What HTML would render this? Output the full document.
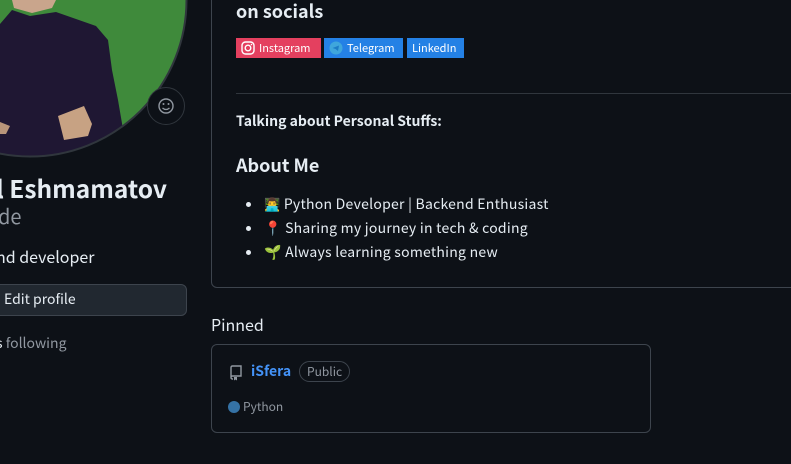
<!DOCTYPE html>
<html><head><meta charset="utf-8"><style>
*{margin:0;padding:0;box-sizing:border-box}
body{width:791px;height:464px;overflow:hidden;background:#0d1117;color:#e6edf3;font-family:"Noto Sans CJK SC","Liberation Sans",sans-serif;position:relative}
.a{position:absolute;white-space:nowrap}
.li{position:relative;padding-left:18px}
.li:before{content:"";position:absolute;left:0;top:10px;width:5px;height:5px;border-radius:50%;background:#e6edf3}
</style></head><body>
<svg class="a" style="left:0;top:0" width="200" height="170">
<defs><clipPath id="c"><circle cx="30" cy="0" r="156"/></clipPath></defs>
<g clip-path="url(#c)">
<rect x="-130" y="-160" width="320" height="320" fill="#3f8a3b"/>
<path d="M0 24 L12 10 L30 16 L56 12 L96 26 L108 40 L112 70 L118 100 L124 135 L118 160 L0 160Z" fill="#1f1733"/>
<path d="M12 0 L56 0 L52 8 L32 13 L14 8Z" fill="#c9a58c"/>
<path d="M58 116 L84 106 L92 124 L88 136 L64 140Z" fill="#c7a283"/>
<path d="M0 122 L10 126 L6 134 L0 134Z" fill="#b8957a"/>
</g>
<circle cx="30" cy="0" r="156.5" fill="none" stroke="#30363d" stroke-width="2"/>
<circle cx="166" cy="106" r="18.5" fill="#0d1117" stroke="#30363d"/>
<circle cx="166" cy="106" r="7" fill="none" stroke="#9198a1" stroke-width="1.4"/>
<circle cx="163.5" cy="104" r="1" fill="#9198a1"/><circle cx="168.5" cy="104" r="1" fill="#9198a1"/>
<path d="M162.5 108 Q166 111 169.5 108" fill="none" stroke="#9198a1" stroke-width="1.3"/>
</svg>
<div class="a" style="left:-4px;top:172px;font-size:24.5px;font-weight:700;line-height:34px">l Eshmamatov</div>
<div class="a" style="left:-2px;top:202px;font-size:20px;color:#9198a1;line-height:28px">de</div>
<div class="a" style="left:-4px;top:245px;font-size:16px;line-height:22px">nd developer</div>
<div class="a" style="left:-10px;top:284px;width:197px;height:32px;background:#212830;border:1px solid #3d444d;border-radius:6px"></div>
<div class="a" style="left:4px;top:289px;font-size:14px;line-height:20px">Edit profile</div>
<div class="a" style="left:-4px;top:333px;font-size:14px;color:#9198a1;line-height:20px"><span style="color:#e6edf3">s</span> following</div>

<div class="a" style="left:211px;top:-10px;width:600px;height:298px;border:1px solid #3d444d;border-radius:6px"></div>
<div class="a" style="left:236px;top:-1px;font-size:18px;font-weight:700;line-height:24px">on socials</div>
<div class="a" style="left:236px;top:38px;height:20px;width:85px;background:#e4405f;font-size:11px;line-height:20px;color:#fff;padding-left:23px">Instagram
<svg style="position:absolute;left:5px;top:3px" width="14" height="14"><rect x="1" y="1" width="12" height="12" rx="3.5" fill="none" stroke="#fff" stroke-width="1.4"/><circle cx="7" cy="7" r="2.8" fill="none" stroke="#fff" stroke-width="1.4"/><circle cx="10.5" cy="3.5" r=".8" fill="#fff"/></svg></div>
<div class="a" style="left:324px;top:38px;height:20px;width:79px;background:#2481e5;font-size:11px;line-height:20px;color:#fff;padding-left:23px">Telegram
<svg style="position:absolute;left:5px;top:3px" width="14" height="14"><circle cx="7" cy="7" r="6.5" fill="#3fa6dc"/><path d="M3.5 7 L10 4.5 L9 10 L6.5 8 Z" fill="#1d7cc6"/></svg></div>
<div class="a" style="left:407px;top:38px;height:20px;width:57px;background:#2481e5;font-size:11px;line-height:20px;color:#fff;padding-left:5px">LinkedIn</div>
<div class="a" style="left:236px;top:93px;width:560px;height:1px;background:#30363d"></div>
<div class="a" style="left:236px;top:111px;font-size:14px;font-weight:700;line-height:20px">Talking about Personal Stuffs:</div>
<div class="a" style="left:236px;top:153px;font-size:18px;font-weight:700;line-height:24px">About Me</div>
<div class="a" style="left:246px;top:192px;font-size:14px;line-height:24px;letter-spacing:0.25px">
<div class="li"><span style="font-size:13px">👨‍💻</span> Python Developer | Backend Enthusiast</div>
<div class="li"><span style="color:#e33">📍</span> Sharing my journey in tech &amp; coding</div>
<div class="li"><span style="color:#5b3">🌱</span> Always learning something new</div>
</div>

<div class="a" style="left:211px;top:313px;font-size:16px;line-height:22px">Pinned</div>
<div class="a" style="left:211px;top:344px;width:440px;height:89px;border:1px solid #3d444d;border-radius:6px"></div>
<svg class="a" style="left:229px;top:365px" width="14" height="16"><path d="M2 2.5 Q2 1 3.5 1 H12 V11 H3.5 Q2 11 2 12.5 Z M2 12.5 Q2 14 3.5 14 H4" fill="none" stroke="#9198a1" stroke-width="1.4"/><path d="M5 12 V15.5 L6.5 14.5 L8 15.5 V12Z" fill="#9198a1"/></svg>
<div class="a" style="left:251px;top:361px;font-size:14px;font-weight:700;color:#4493f8;line-height:20px">iSfera</div>
<div class="a" style="left:299px;top:361px;height:21px;padding:0 7px;border:1px solid #3d444d;border-radius:11px;font-size:12px;color:#9198a1;line-height:19px">Public</div>
<div class="a" style="left:228px;top:401px;width:12px;height:12px;border-radius:50%;background:#3572a5"></div>
<div class="a" style="left:243px;top:397px;font-size:12px;color:#9198a1;line-height:20px">Python</div>
</body></html>
